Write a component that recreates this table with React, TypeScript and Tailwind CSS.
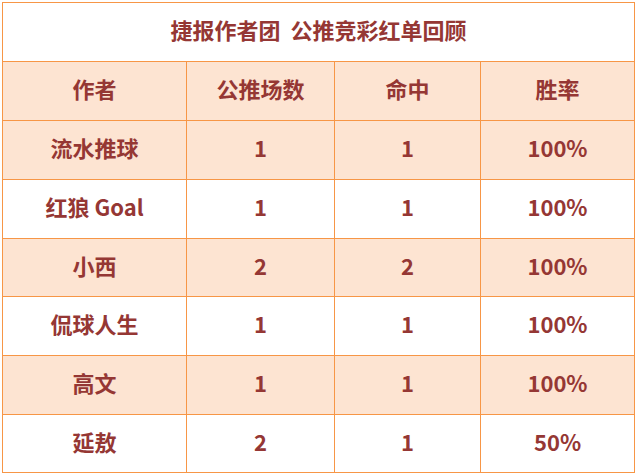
const rows = [
  { name: "流水推球", picks: "1", hits: "1", rate: "100%" },
  { name: "红狼 Goal", picks: "1", hits: "1", rate: "100%" },
  { name: "小西", picks: "2", hits: "2", rate: "100%" },
  { name: "侃球人生", picks: "1", hits: "1", rate: "100%" },
  { name: "高文", picks: "1", hits: "1", rate: "100%" },
  { name: "延敖", picks: "2", hits: "1", rate: "50%" },
];

const heights = ["h-[59px]", "h-[59px]", "h-[58px]", "h-[59px]", "h-[59px]", "h-[58px]"];

const cell = "border border-[#f79646] text-center pb-[5px] p-0";

export default function App() {
  return (
    <div className="w-[637px] h-[475px] bg-white pl-[2px] pt-[2px] font-['Noto_Sans_CJK_SC',sans-serif] font-bold text-[22px] text-[#953734]">
      <table className="w-[632px] border-collapse table-fixed">
        <colgroup>
          <col className="w-[184px]" />
          <col className="w-[148px]" />
          <col className="w-[146px]" />
          <col className="w-[154px]" />
        </colgroup>
        <tbody>
          <tr className="h-[59px]">
            <td colSpan={4} className={cell}>
              捷报作者团&nbsp;&nbsp;公推竞彩红单回顾
            </td>
          </tr>
          <tr className="h-[59px] bg-[#fde4d2]">
            <td className={cell}>作者</td>
            <td className={cell}>公推场数</td>
            <td className={cell}>命中</td>
            <td className={cell}>胜率</td>
          </tr>
          {rows.map((r, i) => (
            <tr key={r.name} className={`${heights[i]} ${i % 2 === 0 ? "bg-[#fde4d2]" : "bg-white"}`}>
              <td className={cell}>{r.name}</td>
              <td className={cell}>{r.picks}</td>
              <td className={cell}>{r.hits}</td>
              <td className={cell}>{r.rate}</td>
            </tr>
          ))}
        </tbody>
      </table>
    </div>
  );
}
